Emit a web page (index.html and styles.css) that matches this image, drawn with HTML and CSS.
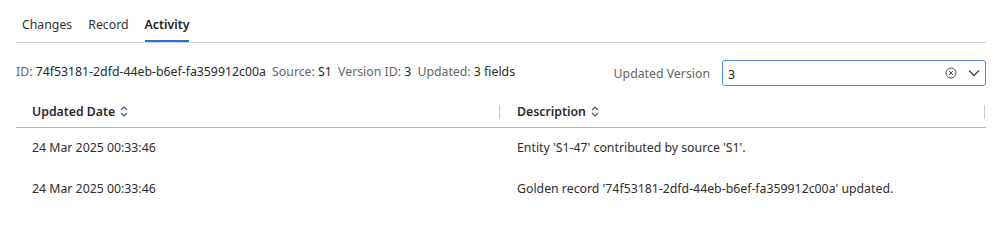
FILE: index.html
```html
<!DOCTYPE html>
<html lang="en">
<head>
  <meta charset="UTF-8">
  <title>Activity</title>
  <link rel="stylesheet" href="styles.css">
</head>
<body>
  <div class="tabs">
    <div class="tab">Changes</div>
    <div class="tab">Record</div>
    <div class="tab active">Activity</div>
  </div>

  <div class="info-bar">
    <div class="info">
      <span class="lbl">ID:</span> <span class="val">74f53181-2dfd-44eb-b6ef-fa359912c00a</span>
      <span class="lbl">Source:</span> <span class="val">S1</span>
      <span class="lbl">Version ID:</span> <span class="val">3</span>
      <span class="lbl">Updated:</span> <span class="val">3 fields</span>
    </div>
    <div class="version">
      <span class="lbl">Updated Version</span>
      <div class="select">
        <span class="select-value">3</span>
        <svg class="clear" width="12" height="12" viewBox="0 0 12 12">
          <circle cx="6" cy="6" r="5" fill="none" stroke="#555" stroke-width="1"/>
          <path d="M4 4 L8 8 M8 4 L4 8" stroke="#555" stroke-width="1"/>
        </svg>
        <svg class="chevron" width="14" height="14" viewBox="0 0 14 14">
          <path d="M2 4.5 L7 9.5 L12 4.5" fill="none" stroke="#444" stroke-width="1.3"/>
        </svg>
      </div>
    </div>
  </div>

  <table>
    <thead>
      <tr>
        <th>Updated Date <svg class="sort" width="8" height="11" viewBox="0 0 8 11"><path d="M1 4 L4 1 L7 4 M1 7 L4 10 L7 7" fill="none" stroke="#3b5a8a" stroke-width="1.2"/></svg><span class="resizer"></span></th>
        <th>Description <svg class="sort" width="8" height="11" viewBox="0 0 8 11"><path d="M1 4 L4 1 L7 4 M1 7 L4 10 L7 7" fill="none" stroke="#3b5a8a" stroke-width="1.2"/></svg><span class="resizer"></span></th>
      </tr>
    </thead>
    <tbody>
      <tr>
        <td>24 Mar 2025 00:33:46</td>
        <td>Entity 'S1-47' contributed by source 'S1'.</td>
      </tr>
      <tr>
        <td>24 Mar 2025 00:33:46</td>
        <td>Golden record '74f53181-2dfd-44eb-b6ef-fa359912c00a' updated.</td>
      </tr>
    </tbody>
  </table>
</body>
</html>
```

FILE: styles.css
```css
body { margin: 0; padding: 0 14px 0 16px; font-family: "Noto Sans", sans-serif; font-size: 12.3px; color: #333; background: #fff; }

.tabs { display: flex; gap: 16px; padding: 15px 0 0 6px; border-bottom: 1px solid #d6d6d6; }
.tab { padding: 0 0 6px 0; color: #333; line-height: 19px; border-bottom: 2px solid transparent; }
.tab.active { font-weight: 600; color: #222; border-bottom-color: #2574d4; }

.info-bar { display: flex; justify-content: space-between; align-items: center; margin-top: 17px; }
.info { margin-top: -3px; }
.lbl { color: #666; }
.val { color: #2a2a2a; margin-right: 3px; }
.version { display: flex; align-items: center; gap: 12px; }
.select { box-sizing: border-box; display: flex; align-items: center; width: 264px; height: 26px; border: 1px solid #4d8fd6; border-radius: 3px; padding: 0 0 0 5px; }
.select-value { flex: 1; color: #222; padding-top: 2px; }
.clear { margin-right: 10px; }
.chevron { margin-right: 4px; }

table { width: 100%; border-collapse: collapse; margin-top: 10px; }
th { position: relative; text-align: left; font-weight: 600; color: #2b2b2b; padding: 7px 16px 6px 16px; border-bottom: 1.5px solid #a7b4c6; line-height: 18px; width: 50%; }
.sort { vertical-align: -1px; margin-left: 2px; }
.resizer { position: absolute; right: 1px; top: 9px; width: 1px; height: 14px; background: #ccc; }
tbody tr { height: 41px; }
td { padding: 0 16px; line-height: 18px; color: #2e2e2e; }
```
